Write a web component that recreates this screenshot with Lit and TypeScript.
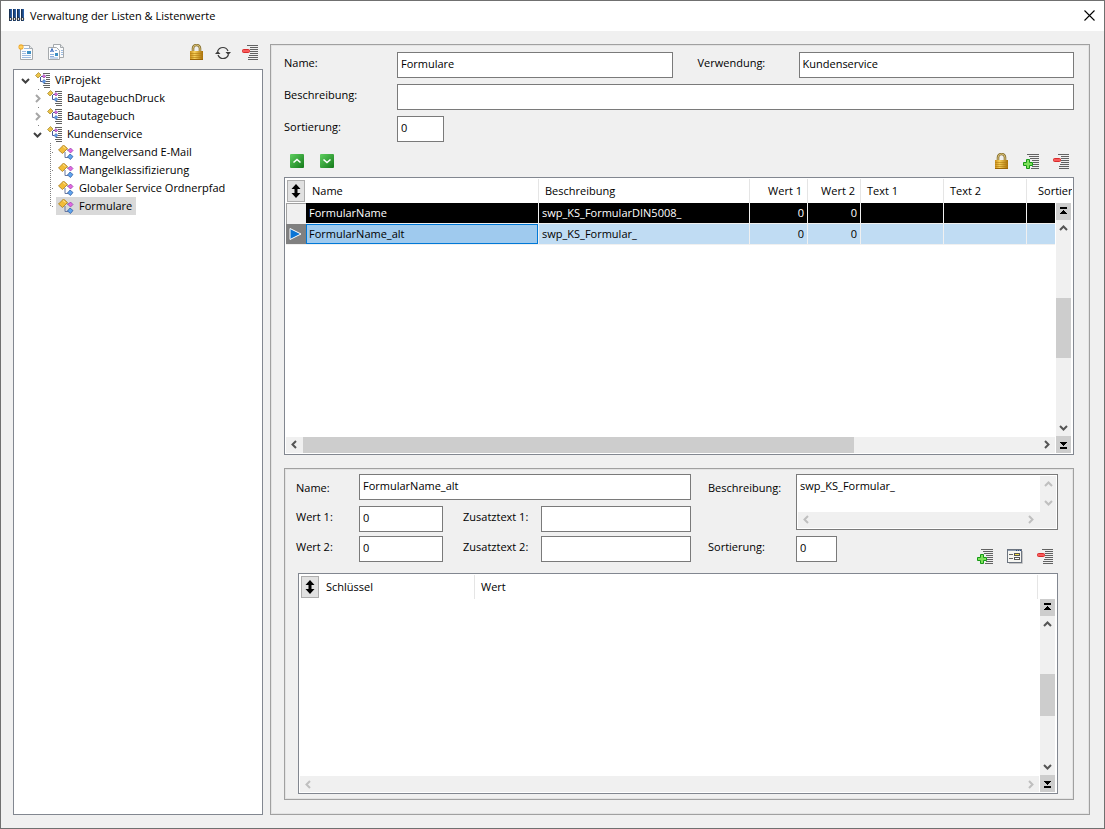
import { LitElement, html, svg, css, nothing } from "lit";
import { customElement, state } from "lit/decorators.js";

type Dir = "up" | "down" | "left" | "right" | "first" | "last";

interface TreeNode {
  label: string;
  children?: TreeNode[];
}

interface ListValue {
  name: string;
  description: string;
  value1: number;
  value2: number;
}

const TREE: TreeNode = {
  label: "ViProjekt",
  children: [
    { label: "BautagebuchDruck", children: [] },
    { label: "Bautagebuch", children: [] },
    {
      label: "Kundenservice",
      children: [
        { label: "Mangelversand E-Mail" },
        { label: "Mangelklassifizierung" },
        { label: "Globaler Service Ordnerpfad" },
        { label: "Formulare" },
      ],
    },
  ],
};

const VALUES: ListValue[] = [
  { name: "FormularName", description: "swp_KS_FormularDIN5008_", value1: 0, value2: 0 },
  { name: "FormularName_alt", description: "swp_KS_Formular_", value1: 0, value2: 0 },
];

const ARROWS: Record<Dir, string> = {
  up: "M2 7L5.5 3.5L9 7",
  down: "M2 4L5.5 7.5L9 4",
  left: "M7 2L3.5 5.5L7 9",
  right: "M4 2L7.5 5.5L4 9",
  first: "M2 1h7v2h-7zM5 4h1v1h1v1h1v1h1v1h-7v-1h1v-1h1v-1h1z",
  last: "M2 8h7v2h-7zM2 3h7v1h-1v1h-1v1h-1v1h-1v-1h-1v-1h-1v-1h-1z",
};

const arrow = (dir: Dir) => {
  const solid = dir === "first" || dir === "last";
  return html`<svg width="11" height="11" viewBox="0 0 11 11">
    <path
      d=${ARROWS[dir]}
      fill=${solid ? "#000" : "none"}
      stroke=${solid ? "none" : "currentColor"}
      stroke-width="2"
    />
  </svg>`;
};

const icons = {
  app: html`<svg width="16" height="13" viewBox="0 0 16 13">
    <defs>
      <linearGradient id="bar" x2="1"><stop stop-color="#14263f" /><stop offset="1" stop-color="#2f6cc0" /></linearGradient>
    </defs>
    ${[0, 4, 8, 12].map(
      (x) => svg`<rect x=${x} width="3" height="12" fill="url(#bar)"/>
        <circle cx=${x + 1.5} cy="10" r="1.3" fill="#fff" stroke="#111" stroke-width=".8"/>`
    )}
  </svg>`,
  close: html`<svg width="11" height="11" viewBox="0 0 11 11">
    <path d="M.5 .5L10.5 10.5M10.5 .5L.5 10.5" stroke="#000" stroke-width="1.1" />
  </svg>`,
  page: html`<svg width="16" height="17" viewBox="0 0 16 17">
    <path d="M2.5 1.5h9l3 3v11h-12z" fill="#fbfcfd" stroke="#a5a9ac" />
    <path d="M11.5 1.5v3h3" fill="#e4e7e9" stroke="#a5a9ac" />
    <path d="M6 4.5h5M4 7.5h4M4 9.5h4M4 11.5h9M4 13.5h9" stroke="#9dbbe0" />
    <path d="M9 7h4v3h-4z" fill="#3d8fc4" />
    <path d="M3 0v6M0 3h6M1 1l4 4M5 1l-4 4" stroke="#f0a828" stroke-width="1.2" />
    <circle cx="3" cy="3" r="1.6" fill="#ffd25e" />
  </svg>`,
  pages: html`<svg width="17" height="17" viewBox="0 0 17 17">
    <path d="M5.5 .5h7l3 3v10h-10z" fill="#fbfcfd" stroke="#a5a9ac" />
    <path d="M12.5 .5v3h3" fill="#e4e7e9" stroke="#a5a9ac" />
    <path d="M13 6.5h2M13 8.5h2M13 10.5h2" stroke="#9dbbe0" />
    <path d="M.5 3.500h8l3 3v9h-11z" fill="#fbfcfd" stroke="#a5a9ac" />
    <path d="M2.500 8l1.500-3.500L5.500 8M3 7h2" stroke="#3d6fc0" fill="none" />
    <path d="M7 6.500h2M2 10.500h4M2 12.500h4M2 14h8" stroke="#8db0dc" />
    <path d="M7 9h3v3h-3z" fill="#3d8fc4" />
  </svg>`,
  lock: html`<svg width="15" height="17" viewBox="0 0 15 17">
    <defs>
      <linearGradient id="gold" x2="1">
        <stop stop-color="#c98f1c" /><stop offset=".35" stop-color="#f6cf5a" /><stop offset="1" stop-color="#a86f08" />
      </linearGradient>
    </defs>
    <path d="M4 8V4.500a3.500 3.500 0 0 1 7 0V8" fill="none" stroke="#8a7434" stroke-width="2.600" />
    <path d="M4 8V4.500a3.500 3.500 0 0 1 7 0V8" fill="none" stroke="#d9c078" />
    <rect x="1" y="7" width="13" height="9" fill="url(#gold)" />
    <path d="M1 9.500h13M1 11.500h13M1 13.500h13" stroke="#b27c10" opacity=".6" />
    <path d="M1 15.500h13" stroke="#9a6507" />
  </svg>`,
  refresh: html`<svg width="16" height="14" viewBox="0 0 16 14">
    <path d="M2.500 5.500C3.500 2.500 5.500 1.500 8 1.500S12 2.500 13 5M13.500 8.500C12.500 11.500 10.500 12.500 8 12.500S4 11.500 3 9" fill="none" stroke="#3c3c3c" stroke-width="1.200" />
    <path d="M0 8h5.500L2.700 5zM16 6h-5.500L13.300 9z" fill="#3c3c3c" />
  </svg>`,
  remove: html`<svg width="17" height="17" viewBox="0 0 17 17">
    <path d="M5 1.500h11M8 3.500h8M8 5.500h8M8 7.500h8M8 9.500h8M7 11.500h9M6 13.500h10M6 15.500h10" stroke="#626262" />
    <rect x=".5" y="5.500" width="7" height="3" rx="1" fill="#f75a5a" stroke="#d82c2c" />
  </svg>`,
  add: html`<svg width="17" height="17" viewBox="0 0 17 17">
    <path d="M4 1.500h12M6 3.500h10M7 5.500h9M9 7.500h7M10 9.500h6M10 11.500h6M9 13.500h7M8 15.500h8" stroke="#626262" />
    <path d="M3.500 6.500h3v3h3v3h-3v3h-3v-3h-3v-3h3z" fill="#7ee05a" stroke="#169a16" />
  </svg>`,
  form: html`<svg width="16" height="15" viewBox="0 0 16 15">
    <path d="M2 14.500h13.500V2" stroke="#c4c4c4" fill="none" />
    <rect x=".5" y=".5" width="14" height="13" fill="#f6f6f2" stroke="#6c7480" />
    <path d="M1 1.500h13" stroke="#8e9bb0" />
    <path d="M9 1.500h1M11 1.500h1M13 1.500h1" stroke="#2d4f86" />
    <path d="M2 5.500h4M2 9.500h4" stroke="#666" />
    <rect x="7.500" y="4.500" width="5" height="2" fill="#f3e04c" stroke="#555" />
    <rect x="7.500" y="8.500" width="5" height="2" fill="#fff" stroke="#555" />
  </svg>`,
  green: (d: string) => html`<svg width="14" height="14" viewBox="0 0 14 14">
    <defs>
      <linearGradient id="green" x2="1" y2="1"><stop stop-color="#5fd060" /><stop offset="1" stop-color="#147a1a" /></linearGradient>
    </defs>
    <rect width="14" height="14" rx="1" fill="url(#green)" />
    <path d=${d} fill="none" stroke="#fff" stroke-width="1.600" />
  </svg>`,
  leaf: html`<svg width="17" height="15" viewBox="0 0 17 15">
    <path d="M9 5h3M7 7v5.500h3" stroke="#6878a0" fill="none" />
    <path d="M5.500 0l4 3.500L4.500 8.500L.5 5z" fill="#f2bc38" stroke="#a87c1c" stroke-width=".8" />
    <path d="M5 1.500l2.500 2" stroke="#ffe89a" />
    <path d="M12.500 3l2.500 2.500L12.500 8L10 5.500z" fill="#e468e0" stroke="#8c3aa8" stroke-width=".7" />
    <path d="M12 9l3 2.500L12.500 14.500L9.500 12z" fill="#5fa4ee" stroke="#27559c" stroke-width=".7" />
  </svg>`,
  folder: html`<svg width="16" height="16" viewBox="0 0 16 16">
    <path d="M8 1.500h7M11 3.500h4M11 5.500h4M11 7.500h4M11 9.500h4M9 11.500h6M8 13.500h7M9 15.500h6" stroke="#626262" />
    <path d="M6 4.500h2M5.500 5v4.500h2" stroke="#4c5c98" fill="none" />
    <path d="M3.500 .500l2.500 2.500L3 6L.500 3.500z" fill="#ecc348" stroke="#a08428" stroke-width=".7" />
    <path d="M9 2.500l1.800 1.800L9 6L7.200 4.300z" fill="#d868d8" stroke="#7c3a98" stroke-width=".6" />
    <path d="M9 7.500l1.800 1.800L9 11.500L7.200 9.500z" fill="#5f9cec" stroke="#27559c" stroke-width=".6" />
  </svg>`,
  sort: html`<svg width="10" height="14" viewBox="0 0 10 14">
    <path d="M5 0L9.500 5H6.500V9H9.500L5 14L.5 9H3.500V5H.5z" fill="#000" />
  </svg>`,
  marker: html`<svg width="13" height="14" viewBox="0 0 13 14">
    <path d="M1 1.500L12 7L1 12.500z" fill="#0a74d4" stroke="#fff" />
  </svg>`,
};

const tool = (label: string, icon: unknown) =>
  html`<button class="tool" type="button" aria-label=${label} title=${label}>${icon}</button>`;

const scrollButton = (dir: Dir, label: string) =>
  html`<button type="button" class="step ${dir}" aria-label=${label}>${arrow(dir)}</button>`;

@customElement("app-root")
export class AppRoot extends LitElement {
  static styles = css`
    :host {
      display: block;
      font: 11px/18px "Open Sans", "Noto Sans", sans-serif;
      color: #000;
    }
    * {
      box-sizing: border-box;
    }
    svg {
      display: block;
      flex: none;
    }
    button {
      display: flex;
      align-items: center;
      justify-content: center;
      padding: 0;
      border: 0;
      background: none;
      font: inherit;
      color: inherit;
    }
    .window {
      display: flex;
      flex-direction: column;
      min-height: 100vh;
      border: 1px solid #707070;
      background: #f0f0f0;
    }
    .titlebar {
      display: flex;
      align-items: center;
      gap: 5px;
      height: 30px;
      padding: 0 9px 2px 8px;
      background: #fff;
    }
    .titlebar h1 {
      flex: 1;
      margin: 0;
      padding-top: 2px;
      font-size: 11px;
      font-weight: 400;
    }
    .body {
      flex: 1;
      display: flex;
      gap: 7px;
      padding: 13px 14px 13px 12px;
    }
    .sidebar {
      display: flex;
      flex-direction: column;
      width: 250px;
      flex: none;
    }
    .toolbar {
      display: flex;
      align-items: center;
      gap: 10px;
    }
    .sidebar .toolbar {
      height: 25px;
      padding: 0 3px 8px;
    }
    .tool {
      width: 20px;
      height: 18px;
    }
    .spacer {
      flex: 1;
    }
    .toolbar .tight {
      display: flex;
      gap: 7px;
    }
    .tree {
      flex: 1;
      padding: 1px 0;
      border: 1px solid #828790;
      background: #fff;
    }
    .tree ul {
      margin: 0;
      padding: 0;
      list-style: none;
    }
    .tree ul ul {
      padding-left: 12px;
      background: linear-gradient(#808080 0 1px, transparent 1px) 24px 0 / 1px 18px repeat-y;
    }
    .tree ul ul ul {
      background: #fff repeating-linear-gradient(#808080 0 1px, #fff 1px 2px) 24px 0 / 1px calc(100% - 8px) no-repeat;
    }
    .tree ul ul ul li {
      background: linear-gradient(#808080, #808080) 14px 9px / 1px 1px no-repeat;
    }
    .node {
      display: flex;
      align-items: center;
      height: 18px;
      padding-left: 4px;
    }
    .node .item {
      gap: 4px;
      height: 18px;
      padding: 0 4px 0 2px;
    }
    .leaf {
      padding-left: 18px;
    }
    .item[aria-current="true"] {
      background: #d9d9d9;
    }
    .twisty {
      width: 15px;
      height: 18px;
      color: #404040;
    }
    .twisty.closed {
      color: #a6a6a6;
    }
    .main {
      flex: 1;
      min-width: 0;
      display: flex;
      flex-direction: column;
      padding: 7px 15px 14px 13px;
      border: 1px solid #a0a0a0;
      box-shadow: inset 0 0 0 1px #e3e3e3;
    }
    .field {
      width: 100%;
      height: 26px;
      padding: 0 3px 2px;
      border: 1px solid #7a7a7a;
      border-radius: 0;
      background: #fff;
      font: inherit;
      color: inherit;
    }
    .head-form .field {
      padding-bottom: 4px;
    }
    label {
      line-height: 22px;
    }
    .head-form {
      display: grid;
      grid-template-columns: 113px 1fr 126px 1fr;
      gap: 6px 0;
    }
    .head-form .second {
      padding-left: 25px;
    }
    .wide {
      grid-column: 2 / -1;
    }
    .head-form .short {
      width: 47px;
    }
    .main > .toolbar {
      height: 35px;
      padding: 3px 3px 0 3px;
    }
    .grid {
      display: grid;
      grid-template-columns: minmax(0, 1fr) 17px;
      grid-template-rows: 24px minmax(0, 1fr) 17px;
      padding: 1px;
      border: 1px solid #828790;
      background: #fff;
      min-height: 0;
    }
    .values {
      flex: 281 1 0;
    }
    .grid table {
      grid-area: 1 / 1 / 3 / 3;
      align-self: start;
      width: 100%;
      table-layout: fixed;
      border-spacing: 0;
    }
    th,
    td {
      overflow: hidden;
      white-space: nowrap;
      text-align: left;
      font-weight: 400;
    }
    th {
      height: 24px;
      padding: 0 5px 0 6px;
      border-right: 1px solid #e5e5e5;
    }
    td {
      height: 21px;
      padding: 0 3px;
      line-height: 20px;
      border-right: 1px solid #f0f0f0;
      border-bottom: 1px solid #f0f0f0;
    }
    th.corner {
      padding: 1px 0 1px 1px;
      border: 0;
    }
    th:last-child {
      border-right: 0;
    }
    .num {
      text-align: right;
    }
    th.cut {
      padding: 0 0 0 11px;
      text-overflow: clip;
    }
    .sorter {
      width: 18px;
      height: 22px;
      border: 1px solid #adadad;
      background: #e1e1e1;
    }
    .c0 { width: 20px; }
    .c1 { width: 233px; }
    .c2 { width: 211px; }
    .c3 { width: 58px; }
    .c4 { width: 53px; }
    .c5 { width: 83px; }
    .k1 { width: 155px; }
    .k3 { width: 18px; }
    .dark td {
      background: #000;
      color: #fff;
    }
    .active td {
      background: #c0dcf3;
    }
    .active td.focus {
      background: #9fcaee;
      box-shadow: inset 0 0 0 1px #0078d7;
      background-clip: padding-box;
    }
    .dark td.rowhead {
      background: #f0f0f0;
      border: 1px solid #a0a0a0;
      border-width: 1px 0 0 1px;
    }
    .active td.rowhead {
      padding: 0 0 0 3px;
      background: #808080;
      border-right: 0;
    }
    .vbar {
      grid-area: 2 / 2 / 4 / 3;
      display: grid;
      grid-template-rows: 17px 17px 61fr 61fr 61fr 17px 17px;
      border: solid #fff;
      border-width: 0 1px;
      background: #f0f0f0;
    }
    .hbar {
      grid-area: 3 / 1;
      display: grid;
      grid-template-columns: 17px 551fr 184fr 17px;
      border-top: 1px solid #fff;
      background: #f0f0f0;
    }
    .hbar.off {
      grid-template-columns: 17px 1fr 17px;
    }
    .step {
      width: 100%;
      height: 100%;
      color: #555;
    }
    .off .step {
      color: #bfbfbf;
    }
    .first,
    .last,
    .thumb {
      background: #cdcdcd;
    }
    .vbar .thumb {
      grid-row: 4;
    }
    .vbar .down {
      grid-row: 6;
    }
    .vbar .last {
      grid-row: 7;
    }
    .hbar .right {
      grid-column: -2;
    }
    .detail {
      flex: 329 1 0;
      display: flex;
      flex-direction: column;
      margin-top: 13px;
      padding: 5px 15px 5px 11px;
      border: 1px solid #a0a0a0;
      box-shadow: inset 0 0 0 1px #e3e3e3;
    }
    .detail-form {
      display: grid;
      grid-template-columns: 63px 84fr 98px 150fr 105px 262fr;
      grid-template-rows: 28px 26px 37px;
      row-gap: 4px;
    }
    .detail-form .second {
      padding-left: 20px;
    }
    .detail-form .third {
      padding-left: 17px;
    }
    .detail-form .roomy {
      line-height: 28px;
    }
    .name {
      grid-column: 2 / 5;
    }
    .memo {
      grid-area: 1 / 6 / 3 / 7;
      display: grid;
      grid-template-columns: minmax(0, 1fr) 16px;
      grid-template-rows: 36px 16px;
      height: 56px;
      padding: 1px;
      border: 1px solid #7a7a7a;
      background: #fff;
    }
    .memo textarea {
      width: 100%;
      height: 36px;
      padding: 1px 2px;
      border: 0;
      outline: 0;
      resize: none;
      overflow: hidden;
      background: #fff;
      font: inherit;
      color: inherit;
    }
    .memo-v {
      display: grid;
      grid-template-rows: 1fr 1fr;
      background: #f0f0f0;
    }
    .memo-h {
      grid-column: 1 / 3;
      display: flex;
      justify-content: space-between;
      padding-right: 17px;
      background: #f0f0f0;
    }
    .memo-h .step {
      width: 17px;
    }
    .last-cell {
      grid-column: 6;
      display: flex;
      justify-content: space-between;
    }
    .last-cell .field {
      width: 41px;
    }
    .last-cell .toolbar {
      align-items: flex-end;
      padding: 0 3px 7px 0;
    }
    .pairs {
      flex: 1;
      margin-left: 2px;
    }
  `;

  @state() private selected = "Formulare";
  @state() private closed = new Set<string>(["BautagebuchDruck", "Bautagebuch"]);

  private toggle(label: string) {
    const next = new Set(this.closed);
    next.has(label) ? next.delete(label) : next.add(label);
    this.closed = next;
  }

  private renderNode(node: TreeNode): unknown {
    const branch = node.children !== undefined;
    const open = branch && !this.closed.has(node.label);
    return html`<li>
      <div class="node ${branch ? "" : "leaf"}">
        ${branch
          ? html`<button
              type="button"
              class="twisty ${open ? "" : "closed"}"
              aria-label=${node.label}
              aria-expanded=${open}
              @click=${() => this.toggle(node.label)}
            >
              ${arrow(open ? "down" : "right")}
            </button>`
          : nothing}
        <button
          type="button"
          class="item"
          aria-current=${node.label === this.selected}
          @click=${() => (this.selected = node.label)}
        >
          ${branch ? icons.folder : icons.leaf}<span>${node.label}</span>
        </button>
      </div>
      ${open && node.children!.length ? html`<ul>${node.children!.map((c) => this.renderNode(c))}</ul>` : nothing}
    </li>`;
  }

  private renderVBar() {
    return html`<div class="vbar">
      ${scrollButton("first", "Zum Anfang")}${scrollButton("up", "Nach oben")}
      <div class="thumb"></div>
      ${scrollButton("down", "Nach unten")}${scrollButton("last", "Zum Ende")}
    </div>`;
  }

  private renderHBar(active: boolean) {
    return html`<div class="hbar ${active ? "" : "off"}">
      ${scrollButton("left", "Nach links")}
      ${active ? html`<div class="thumb"></div>` : nothing}
      ${scrollButton("right", "Nach rechts")}
    </div>`;
  }

  private renderCorner() {
    return html`<th class="corner c0">
      <button type="button" class="sorter" aria-label="Sortieren">${icons.sort}</button>
    </th>`;
  }

  private renderValues() {
    return html`<div class="grid values">
      <table>
        <thead>
          <tr>
            ${this.renderCorner()}
            <th class="c1">Name</th>
            <th class="c2">Beschreibung</th>
            <th class="c3 num">Wert 1</th>
            <th class="c4 num">Wert 2</th>
            <th class="c5">Text 1</th>
            <th class="c5">Text 2</th>
            <th class="cut">Sortierung</th>
          </tr>
        </thead>
        <tbody>
          ${VALUES.map((v, i) => {
            const active = i === 1;
            return html`<tr class=${active ? "active" : "dark"}>
              <td class="rowhead">${active ? icons.marker : nothing}</td>
              <td class=${active ? "focus" : ""}>${v.name}</td>
              <td>${v.description}</td>
              <td class="num">${v.value1}</td>
              <td class="num">${v.value2}</td>
              <td></td>
              <td></td>
              <td></td>
            </tr>`;
          })}
        </tbody>
      </table>
      ${this.renderVBar()}${this.renderHBar(true)}
    </div>`;
  }

  private renderDetail() {
    return html`<section class="detail">
      <div class="detail-form">
        <label class="roomy" for="d-name">Name:</label>
        <input class="field name" id="d-name" value="FormularName_alt" />
        <label class="third roomy" for="d-desc">Beschreibung:</label>
        <div class="memo">
          <textarea id="d-desc" .value=${"swp_KS_Formular_"}></textarea>
          <div class="memo-v off">${scrollButton("up", "Nach oben")}${scrollButton("down", "Nach unten")}</div>
          <div class="memo-h off">${scrollButton("left", "Nach links")}${scrollButton("right", "Nach rechts")}</div>
        </div>
        <label for="d-v1">Wert 1:</label>
        <input class="field" id="d-v1" value="0" />
        <label class="second" for="d-t1">Zusatztext 1:</label>
        <input class="field" id="d-t1" />
        <span></span>
        <label for="d-v2">Wert 2:</label>
        <input class="field" id="d-v2" value="0" />
        <label class="second" for="d-t2">Zusatztext 2:</label>
        <input class="field" id="d-t2" />
        <label class="third" for="d-sort">Sortierung:</label>
        <div class="last-cell">
          <input class="field" id="d-sort" value="0" />
          <div class="toolbar">
            ${tool("Eintrag hinzufügen", icons.add)}${tool("Formular", icons.form)}${tool("Eintrag entfernen", icons.remove)}
          </div>
        </div>
      </div>
      <div class="grid pairs">
        <table>
          <thead>
            <tr>
              ${this.renderCorner()}
              <th class="k1">Schlüssel</th>
              <th>Wert</th>
              <th class="k3"></th>
            </tr>
          </thead>
        </table>
        ${this.renderVBar()}${this.renderHBar(false)}
      </div>
    </section>`;
  }

  render() {
    return html`<div class="window">
      <header class="titlebar">
        ${icons.app}
        <h1>Verwaltung der Listen &amp; Listenwerte</h1>
        <button type="button" aria-label="Schließen">${icons.close}</button>
      </header>
      <div class="body">
        <aside class="sidebar">
          <div class="toolbar">
            ${tool("Neue Liste", icons.page)}${tool("Liste kopieren", icons.pages)}
            <span class="spacer"></span>
            <div class="tight">
              ${tool("Sperren", icons.lock)}${tool("Aktualisieren", icons.refresh)}${tool("Liste entfernen", icons.remove)}
            </div>
          </div>
          <nav class="tree"><ul>${this.renderNode(TREE)}</ul></nav>
        </aside>
        <main class="main">
          <div class="head-form">
            <label for="name">Name:</label>
            <input class="field" id="name" value="Formulare" />
            <label class="second" for="usage">Verwendung:</label>
            <input class="field" id="usage" value="Kundenservice" />
            <label for="desc">Beschreibung:</label>
            <input class="field wide" id="desc" />
            <label for="sort">Sortierung:</label>
            <input class="field short" id="sort" value="0" />
          </div>
          <div class="toolbar">
            ${tool("Nach oben verschieben", icons.green("M3.500 8.500L7 5.500L10.500 8.500"))}
            ${tool("Nach unten verschieben", icons.green("M3.500 5.500L7 8.500L10.500 5.500"))}
            <span class="spacer"></span>
            ${tool("Sperren", icons.lock)}${tool("Wert hinzufügen", icons.add)}${tool("Wert entfernen", icons.remove)}
          </div>
          ${this.renderValues()} ${this.renderDetail()}
        </main>
      </div>
    </div>`;
  }
}
